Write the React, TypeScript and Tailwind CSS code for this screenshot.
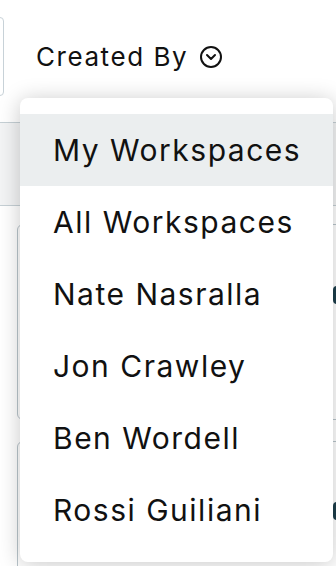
import { CircleChevronDown } from "lucide-react"

const people = ["My Workspaces", "All Workspaces", "Nate Nasralla", "Jon Crawley", "Ben Wordell", "Rossi Guiliani"]

export default function App() {
    return (
        <div className="relative w-[336px] h-[566px] overflow-hidden bg-white text-[#111] font-['Inter',sans-serif]">
            {/* page behind the menu */}
            <div className="flex items-center pt-[17px] h-[96px]">
                <div className="-ml-4 w-5 h-[79px] rounded border border-[#c8d2d8]" />
                <button className="ml-[32px] flex items-center gap-[11px] text-[26px] tracking-[0.06em]">
                    Created By
                    <CircleChevronDown className="w-6 h-6" strokeWidth={2} />
                </button>
            </div>

            <div className="mt-[26px] h-[84px] bg-[#f3f4f5] border-y border-[#c6d0d5]" />

            <div className="ml-[17px] mt-[18px] w-[345px] h-[196px] rounded-md border border-[#b9c5cb] flex justify-end pt-[61px] pr-1">
                <div className="w-6 h-[18px] bg-[#1d3f4c] rounded-sm" />
            </div>
            <div className="ml-[17px] mt-[21px] w-[345px] h-[196px] rounded-md border border-[#b9c5cb] flex justify-end pt-[60px] pr-1">
                <div className="w-6 h-[18px] bg-[#1d3f4c] rounded-sm" />
            </div>

            {/* open dropdown */}
            <div className="absolute left-[20px] top-[98px] w-[313px] rounded-lg bg-white py-4 shadow-[0_2px_22px_rgba(0,0,0,0.22)]">
                {people.map((p, i) => (
                    <div
                        key={p}
                        className={`h-[72px] flex items-center pl-[33px] text-[30px] tracking-[0.05em] ${i === 0 ? "bg-[#ebeeef]" : ""}`}
                    >
                        {p}
                    </div>
                ))}
            </div>
        </div>
    )
}
